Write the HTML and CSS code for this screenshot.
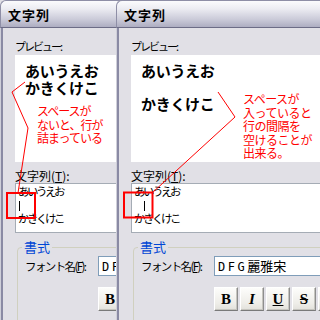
FILE: index.html
```html
<!DOCTYPE html>
<html lang="ja">
<head>
<meta charset="utf-8">
<title>文字列</title>
<link rel="stylesheet" href="styles.css">
</head>
<body>
<div class="desk">
  <section class="win win-a">
    <header class="title">文字列</header>
    <div class="body">
      <div class="label narrow">プレビュー:</div>
      <div class="preview">あいうえお<br>かきくけこ</div>
      <div class="label label2">文字列(<u>T</u>):</div>
      <div class="textarea">あいうえお<br><span class="caret"></span><br>かきくけこ</div>
      <fieldset class="group">
        <legend>書式</legend>
        <div class="row"><span class="flabel">フォント名(<u>F</u>):</span><div class="input"><span class="latin">DFG</span>麗雅宋</div></div>
        <div class="buttons">
          <span class="btn b">B</span><span class="btn i">I</span><span class="btn u">U</span><span class="btn s">S</span><span class="btn"></span>
        </div>
      </fieldset>
    </div>
  </section>

  <section class="win win-b">
    <header class="title">文字列</header>
    <div class="body">
      <div class="label narrow">プレビュー:</div>
      <div class="preview">あいうえお<br>　<br>かきくけこ</div>
      <div class="label label2">文字列(<u>T</u>):</div>
      <div class="textarea">あいうえお<br><span class="sp">　</span><span class="caret"></span><br>かきくけこ</div>
      <fieldset class="group">
        <legend>書式</legend>
        <div class="row"><span class="flabel">フォント名(<u>F</u>):</span><div class="input"><span class="latin">DFG</span>麗雅宋</div></div>
        <div class="buttons">
          <span class="btn b">B</span><span class="btn i">I</span><span class="btn u">U</span><span class="btn s">S</span><span class="btn"></span>
        </div>
      </fieldset>
    </div>
  </section>

  <svg class="marks" width="320" height="320" viewBox="0 0 320 320">
    <polyline points="25,82 12,92 28,128 18,193" fill="none" stroke="#ff0000" stroke-width="1"/>
    <rect x="7" y="193" width="28" height="25" fill="none" stroke="#ff0000" stroke-width="2"/>
    <polyline points="218,92 235,117 152,193" fill="none" stroke="#ff0000" stroke-width="1"/>
    <rect x="124" y="192.5" width="28.5" height="25" fill="none" stroke="#ff0000" stroke-width="2"/>
  </svg>

  <div class="note note-a">スペースが<br>ないと、行が<br>詰まっている</div>
  <div class="note note-b">スペースが<br>入っていると<br>行の間隔を<br>空けることが<br>出来る。</div>
</div>
</body>
</html>
```

FILE: styles.css
```css
* { box-sizing: border-box; }
html, body { margin: 0; padding: 0; }
body {
  width: 320px;
  height: 320px;
  overflow: hidden;
  background: #e1e0e6;
  font-family: "Noto Sans CJK JP", "Liberation Sans", sans-serif;
  font-size: 12px;
  color: #000;
}
.desk {
  position: relative;
  width: 320px;
  height: 320px;
  overflow: hidden;
}
.win {
  position: absolute;
  top: 0;
  width: 240px;
  height: 330px;
  display: flex;
  flex-direction: column;
}
.win-a { left: 0; }
.win-b { left: 116px; }

.title {
  height: 28px;
  padding-left: 7px;
  border-top: 1px solid #8e8ea6;
  border-left: 1px solid #8e8ea6;
  border-bottom: 1px solid #6c6c86;
  border-radius: 6px 0 0 0;
  background: linear-gradient(#fbfbfd 0%, #ececf2 30%, #cbcbd9 70%, #adadc1 100%);
  font-weight: bold;
  font-size: 13px;
  line-height: 27px;
  letter-spacing: 1px;
}
.body {
  flex: 1;
  background: #e1e0e6;
  border-left: 1px solid #cfcfd9;
  box-shadow: inset 2px 0 0 #8a8aa4;
  padding: 11px 0 0 14px;
  display: flex;
  flex-direction: column;
}
.label {
  line-height: 14px;
  height: 14px;
  white-space: nowrap;
}
.label.narrow {
  font-size: 11px;
  letter-spacing: -2px;
}
.label2 { margin-top: 7px; }

.preview {
  margin-top: 2px;
  height: 107px;
  background: #fff;
  padding: 8px 0 0 10px;
  font-size: 15px;
  font-weight: bold;
  line-height: 16.5px;
  letter-spacing: -0.3px;
}
.textarea {
  height: 50px;
  background: #fff;
  border: 1px solid #a5acb5;
  padding: 1px 0 0 2px;
  font-size: 11.5px;
  line-height: 13.5px;
  letter-spacing: -2.5px;
}
.caret {
  display: inline-block;
  width: 1px;
  height: 10px;
  background: #000;
  margin-left: 1px;
  vertical-align: -1px;
}
.sp { letter-spacing: -3px; }

.group {
  margin: 7px 0 0 2px;
  border: 1px solid #d0d0bf;
  border-radius: 4px;
  padding: 2px 0 12px 7px;
  min-inline-size: 0;
}
.group legend {
  font-size: 13px;
  line-height: 14px;
  color: #0046d5;
  padding: 0 2px;
  margin-left: -3px;
}
.row {
  display: flex;
  align-items: center;
  height: 20px;
}
.flabel {
  width: 73px;
  flex: none;
  white-space: nowrap;
  font-size: 11.5px;
  letter-spacing: -1.6px;
}
.input {
  flex: 1;
  height: 20px;
  border: 1px solid #7f9db9;
  background: #fff;
  padding-left: 3px;
  font-size: 13px;
  line-height: 18px;
  white-space: nowrap;
}
.latin {
  font-family: "DejaVu Sans Mono", monospace;
  font-size: 12px;
  letter-spacing: 2.5px;
}
.buttons {
  display: flex;
  gap: 2px;
  margin-top: 11px;
  padding-left: 73px;
}
.btn {
  flex: none;
  width: 24px;
  height: 24px;
  display: flex;
  align-items: center;
  justify-content: center;
  background: linear-gradient(#fdfdfb, #eeede8 70%, #e2e1db);
  border: 1px solid;
  border-color: #ffffff #8e8e8e #7a7a7a #ffffff;
  box-shadow: inset -1px -1px 0 #c6c5bf;
  font-family: "Liberation Serif", serif;
  font-weight: bold;
  font-size: 15px;
  line-height: 1;
}
.btn.i { font-style: italic; }
.btn.u { text-decoration: underline; }
.btn.s { text-decoration: line-through; }

.marks {
  position: absolute;
  left: 0;
  top: 0;
  pointer-events: none;
}
.note {
  position: absolute;
  color: #ff0000;
  font-size: 12px;
  white-space: nowrap;
}
.note-a {
  left: 37px;
  top: 104px;
  line-height: 13.5px;
  letter-spacing: -1px;
}
.note-b {
  left: 243px;
  top: 92px;
  line-height: 13.5px;
  letter-spacing: -0.5px;
}
```
